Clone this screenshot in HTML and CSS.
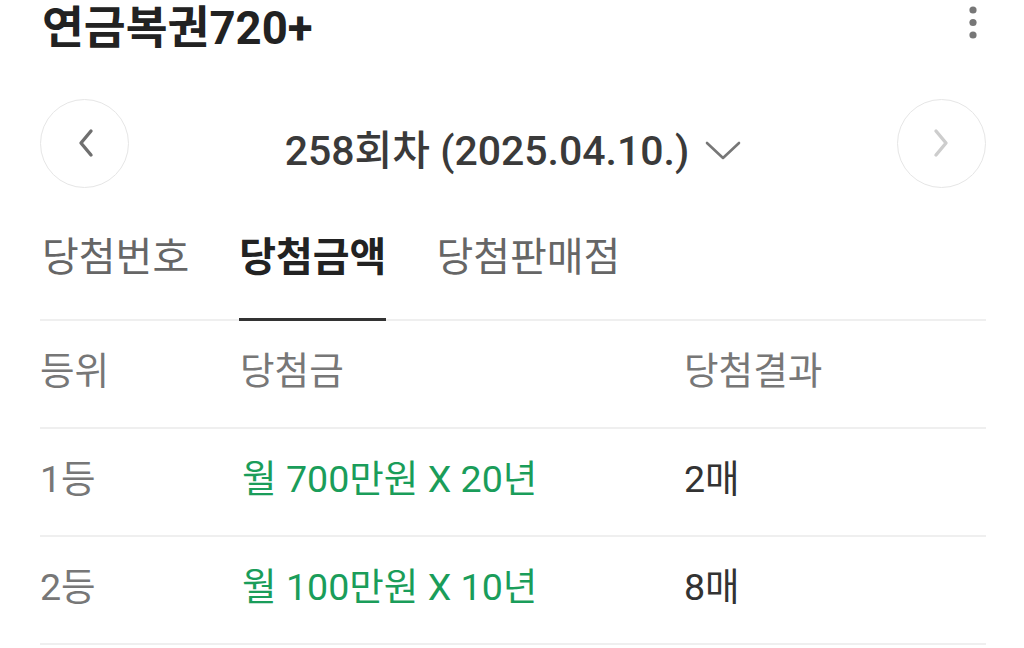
FILE: index.html
```
<!DOCTYPE html>
<html lang="ko">
<head>
<meta charset="utf-8">
<link rel="stylesheet" href="styles.css">
</head>
<body>
<div class="page">
  <header class="topbar">
    <h1 class="title">연금복권720+</h1>
    <button class="kebab" aria-label="더보기">
      <svg width="10" height="44" viewBox="0 0 10 44"><circle cx="5" cy="10" r="3.6" fill="#777"/><circle cx="5" cy="22.5" r="3.6" fill="#777"/><circle cx="5" cy="35" r="3.6" fill="#777"/></svg>
    </button>
  </header>

  <div class="round-nav">
    <button class="circle-btn">
      <svg width="24" height="30" viewBox="0 0 24 30"><path d="M18 3 L8 15 L18 27" fill="none" stroke="#6f6f6f" stroke-width="3.4" stroke-linecap="round" stroke-linejoin="round"/></svg>
    </button>
    <div class="round-select">
      <span class="round-text">258회차 (2025.04.10.)</span>
      <svg class="caret" width="36" height="20" viewBox="0 0 36 20"><path d="M2 2 L18 17 L34 2" fill="none" stroke="#777" stroke-width="2.6" stroke-linecap="round" stroke-linejoin="round"/></svg>
    </div>
    <button class="circle-btn disabled">
      <svg width="24" height="30" viewBox="0 0 24 30"><path d="M7 3 L17 15 L7 27" fill="none" stroke="#cdcdcd" stroke-width="3.4" stroke-linecap="round" stroke-linejoin="round"/></svg>
    </button>
  </div>

  <nav class="tabs">
    <span class="tab">당첨번호</span>
    <span class="tab active">당첨금액</span>
    <span class="tab">당첨판매점</span>
  </nav>

  <div class="table">
    <div class="row head">
      <span>등위</span><span>당첨금</span><span>당첨결과</span>
    </div>
    <div class="row">
      <span class="rank">1등</span><span class="prize">월 700만원 X 20년</span><span class="count">2매</span>
    </div>
    <div class="row">
      <span class="rank">2등</span><span class="prize">월 100만원 X 10년</span><span class="count">8매</span>
    </div>
  </div>
</div>
</body>
</html>
```
FILE: styles.css
```
* { box-sizing: border-box; }
html, body { margin: 0; padding: 0; background: #fff; }
body {
  font-family: "Roboto", "Noto Sans CJK KR", sans-serif;
  color: #333;
  width: 1024px;
  height: 648px;
  overflow: hidden;
}
.page { padding: 0 38px 0 40px; }

.topbar {
  height: 58px;
  display: flex;
  align-items: center;
  justify-content: space-between;
}
.title {
  margin: 0 0 0 2px;
  font-size: 45.5px;
  line-height: 1;
  font-weight: 700;
  color: #222;
}
.kebab {
  border: 0;
  background: none;
  padding: 0;
  margin: 0 8px 0 0;
  align-self: flex-start;
  display: block;
  height: 44px;
}
.kebab svg { display: block; }

.round-nav {
  margin-top: 41px;
  height: 88px;
  display: flex;
  align-items: center;
  justify-content: space-between;
}
.circle-btn {
  width: 89px;
  height: 89px;
  border-radius: 50%;
  border: 1.5px solid #e6e6e6;
  background: #fff;
  display: flex;
  align-items: center;
  justify-content: center;
  padding: 0;
}
.circle-btn svg { display: block; }
.round-select {
  display: flex;
  align-items: center;
  gap: 16px;
  margin-top: 16px;
}
.round-text {
  font-size: 41px;
  font-weight: 500;
  color: #3a3a3a;
  line-height: 1;
}
.caret { display: block; margin-top: 0; }

.tabs {
  margin-top: 33px;
  display: flex;
  gap: 50px;
  border-bottom: 2px solid #efefef;
  padding-left: 2px;
}
.tab {
  font-size: 40px;
  line-height: 1;
  color: #666;
  padding: 18px 0 40px;
  margin-bottom: -2px;
  border-bottom: 3px solid transparent;
  font-weight: 400;
}
.tab.active {
  color: #222;
  font-weight: 700;
  border-bottom-color: #333;
}

.row {
  display: grid;
  grid-template-columns: 200px 444px 1fr;
  align-items: center;
  height: 108px;
  border-bottom: 2px solid #efefef;
  font-size: 37.6px;
  line-height: 1;
  padding-bottom: 4px;
}
.row.head { color: #777; }
.rank { color: #777; }
.prize { color: #1a9d5a; padding-left: 2px; }
.count { color: #333; }
```
